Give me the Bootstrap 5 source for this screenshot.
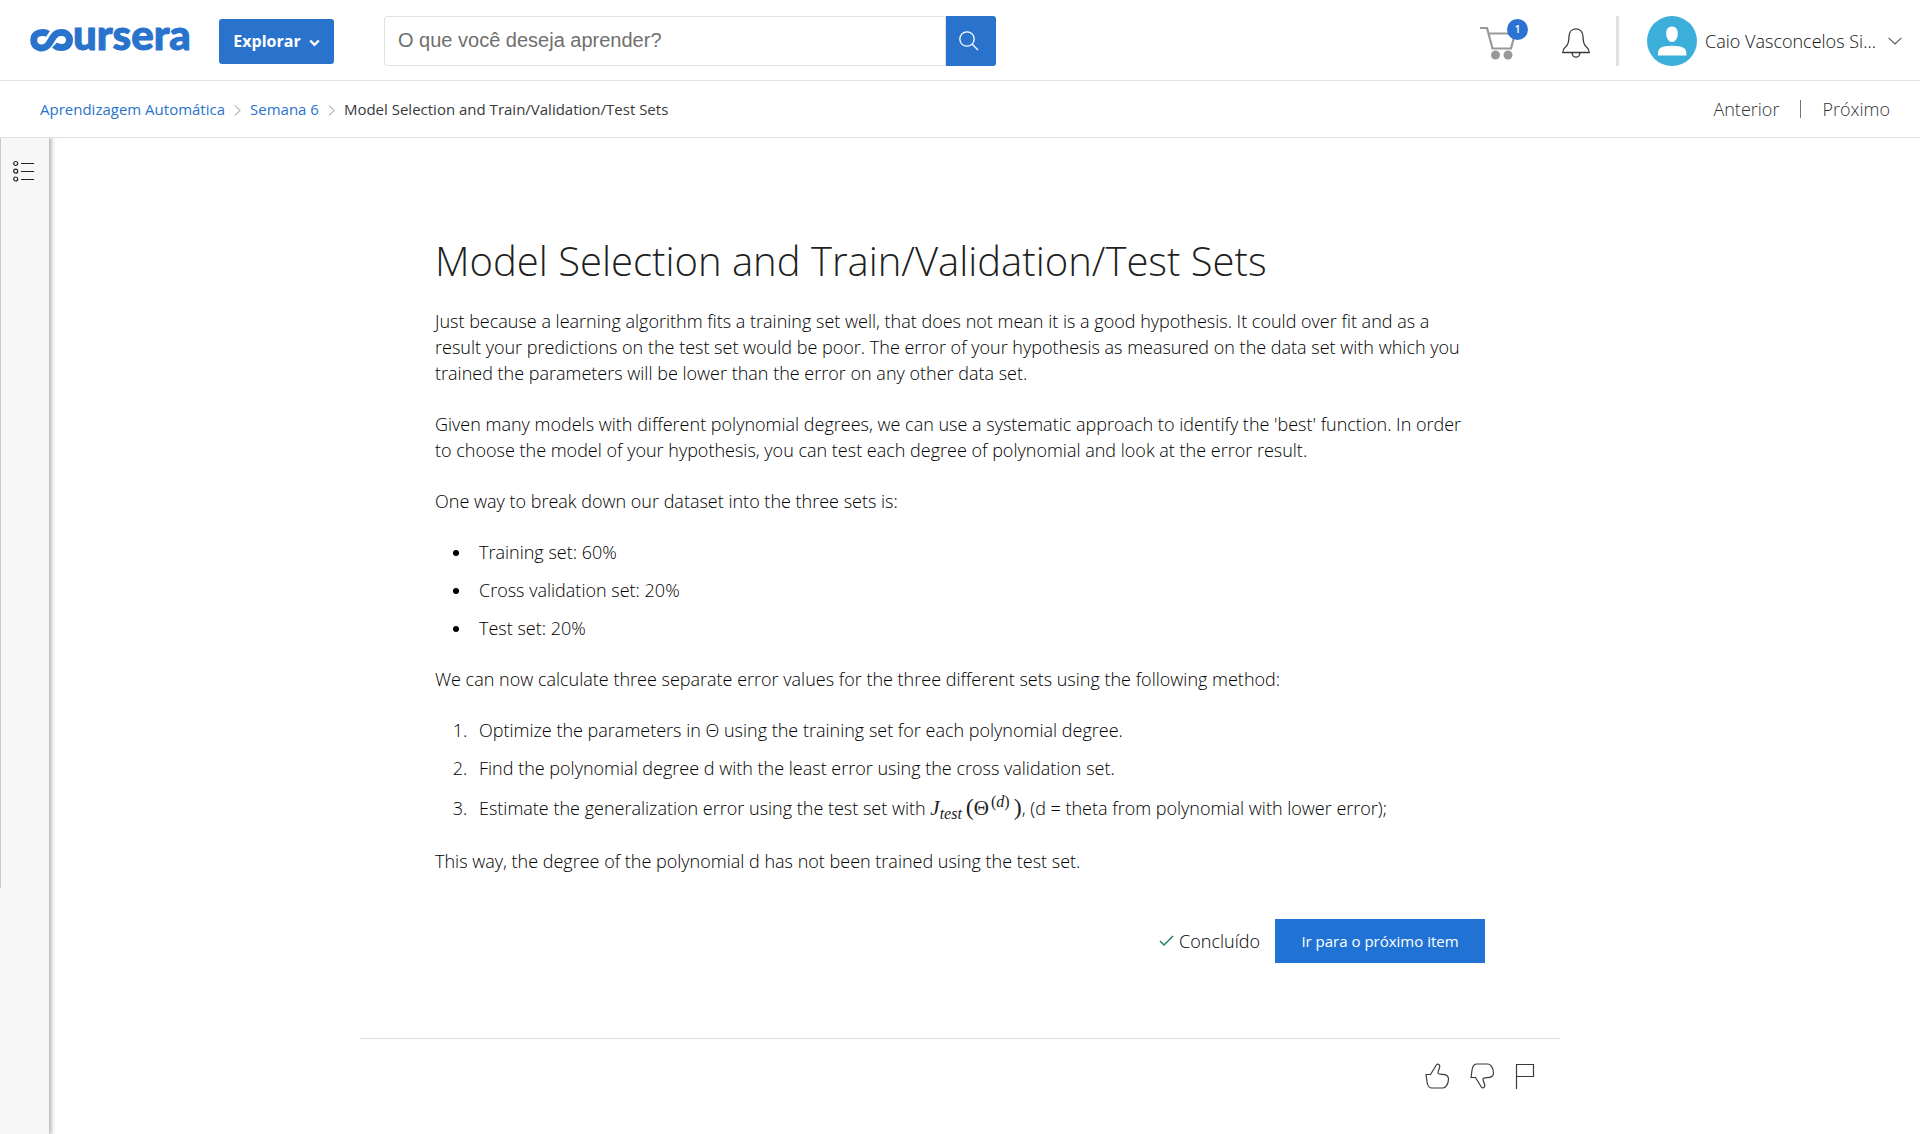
<!DOCTYPE html>
<html lang="pt-BR">
<head>
<meta charset="utf-8">
<meta name="viewport" content="width=device-width, initial-scale=1">
<title>Model Selection and Train/Validation/Test Sets | Coursera</title>
<link href="https://cdn.jsdelivr.net/npm/bootstrap@5.3.0/dist/css/bootstrap.min.css" rel="stylesheet">
<style>
body{font-family:"Open Sans",sans-serif;font-size:18px;font-weight:300;line-height:26px;color:#000;background:#fff}
svg{display:block;flex:none}
.site-header{height:81px;border-bottom:1px solid #e1e1e1;padding:2px 18px 0 30px}
.brand-word{font-family:Lato,sans-serif;font-weight:900;font-size:42px;fill:#2a73cc;stroke:#2a73cc;stroke-width:1px}
.btn-explore{width:115px;height:45px;background:#2a73cc;border-radius:3px;color:#fff;font-size:16px;font-weight:700;margin-left:23px}
.search-form{width:612px;height:50px;margin-left:50px}
.search-form .form-control{border:1px solid #e1e1e1;border-radius:3px 0 0 3px;font-family:"Liberation Sans",sans-serif;font-size:20px;padding:0 13px 2px;color:#333}
.search-form .form-control::placeholder{color:#6f6f6f;opacity:1}
.search-form .btn{flex:none;width:50px;background:#2a73cc;border-radius:0 3px 3px 0}
.cart-count{width:21px;height:21px;right:-12px;top:-3px;background:#2a73d2;color:#fff;font-size:10px;font-weight:600;line-height:21px}
.bell-link{margin-left:46px}
.head-rule{width:3px;height:50px;margin:0 28px 0 26px;background:#e1e1e1}
.user-name{color:#111}
.sub-bar{height:57px;border-bottom:1px solid #e1e1e1;padding:0 30px 0 40px}
.crumbs{font-size:15px;font-weight:400;gap:9px;color:#373a3c}
.crumbs a{color:#2a73cc}
.crumbs svg{margin-top:3px}
.item-nav a{color:#333}
.item-rule{width:1px;height:18px;background:#757575;margin:0 21px}
.page-body{min-height:calc(100vh - 138px)}
.side-rail{width:49px;background:#f7f7f7;box-shadow:1px 0 5px 1px rgba(0,0,0,.35);clip-path:inset(0 -10px 0 0)}
.rail-inner{height:750px;border-left:1px solid #ccc;padding:22px 0 0 12px}
.main-col{padding-right:49px}
.reading{max-width:1200px}
.reading-text{padding:95px 75px 0}
.reading h1{font-size:40px;font-weight:300;line-height:56px;margin:0 0 19px;color:#1f1f1f}
.reading-text p{max-width:1042px;margin:0 0 25px}
.reading-text ul,.reading-text ol{padding-left:37px;margin:0 0 25px}
.reading-text li{padding-left:7px}
.reading-text li+li{margin-top:12px}
.formula{font-family:"Liberation Serif",serif;font-size:21px;font-weight:400;line-height:30px;white-space:nowrap;color:#222}
.formula sub,.formula sup{font-size:16px;line-height:0}
.formula sub{margin-right:4px}
.formula sup{margin:0 4px 0 2px}
.formula .fence{font-size:24px;line-height:0}
.done-row{padding-top:20px}
.btn-next{width:210px;height:44px;background:#2073d5;border-radius:0;color:#fff;font-size:15px;margin-left:15px}
.feedback{border-top:1px solid #ddd;margin-top:75px;padding:24px 25px 0 0;gap:20px}
.btn-bare{border:0;background:none;padding:0;color:#373a3c;font-weight:300}
</style>
</head>
<body>
<header class="site-header d-flex align-items-center">
  <a href="#" aria-label="coursera">
    <svg width="166" height="68" viewBox="0 -13 166 68">
      <path d="M18 13.800C14.500 11.500 3.700 11.500 3.700 20C3.700 28.500 13.500 30 18 25C22.500 20 23 12.500 31.500 12.500C36.500 12.500 39.500 16 39.500 20C39.500 24.500 36.500 27.500 31.500 27.500C28 27.500 26.500 27 24.500 25" fill="none" stroke="#2a73cc" stroke-width="7"/>
      <text class="brand-word" x="43" y="30">ursera</text>
    </svg>
  </a>
  <button class="btn btn-explore d-flex align-items-center justify-content-center p-0" type="button">Explorar
    <svg class="ms-2 mt-1" width="11" height="8" viewBox="0 0 11 8"><path d="M1.200 1.500L5.500 5.800L9.800 1.500" fill="none" stroke="#fff" stroke-width="2.400"/></svg>
  </button>
  <form class="search-form d-flex" role="search">
    <input class="form-control" type="text" aria-label="Pesquisar" placeholder="O que você deseja aprender?">
    <button class="btn p-0 d-flex align-items-center justify-content-center" type="button" aria-label="Buscar">
      <svg class="me-1" width="20" height="20" viewBox="0 0 20 20" fill="none" stroke="#fff" stroke-width="1.300"><circle cx="8" cy="8" r="7.200"/><path d="M13 13L19 19"/></svg>
    </button>
  </form>
  <div class="d-flex align-items-center ms-auto">
    <a href="#" class="position-relative pt-1" aria-label="Carrinho">
      <svg width="36" height="34" viewBox="0 0 36 34"><path d="M0 2H7L12.500 22.500H31L35 7.500H8.500" fill="none" stroke="#999" stroke-width="2.200"/><circle cx="15.500" cy="29" r="4.500" fill="#999"/><circle cx="28" cy="29" r="4.500" fill="#999"/></svg>
      <span class="cart-count position-absolute rounded-circle text-center">1</span>
    </a>
    <a href="#" class="bell-link pt-1" aria-label="Notificações">
      <svg width="28" height="30" viewBox="0 0 28 30" fill="none" stroke="#373a3c" stroke-width="1.300"><path d="M14 .8C9.500 .8 7 4.300 7 8.500C7 14.500 6 17 3.500 19C1.500 20.600 .8 22 .8 24.500H27.200C27.200 22 26.500 20.600 24.500 19C22 17 21 14.500 21 8.500C21 4.300 18.500 .8 14 .8Z"/><path d="M10.200 25C10.200 27.500 12 29.200 14 29.200S17.800 27.500 17.800 25"/></svg>
    </a>
    <div class="head-rule"></div>
    <button class="btn-bare d-flex align-items-center" type="button">
      <svg width="50" height="50" viewBox="0 0 50 50"><circle cx="25" cy="25" r="25" fill="#3caeda"/><path d="M25 10.500C29 10.500 31 13.500 30.800 18C30.500 22.500 28 26 25 26S19.500 22.500 19.200 18C19 13.500 21 10.500 25 10.500ZM11 39.500C11 33 12.500 31.500 17 30.500C22 29.500 28 29.500 33 30.500C37.500 31.500 39.500 33 39.500 39.500Z" fill="#fff"/></svg>
      <span class="user-name mx-2">Caio Vasconcelos Si...</span>
      <svg class="ms-1" width="14" height="8" viewBox="0 0 14 8"><path d="M.6 .8L7 7L13.400 .8" fill="none" stroke="#555" stroke-width="1.100"/></svg>
    </button>
  </div>
</header>
<div class="sub-bar d-flex align-items-center justify-content-between">
  <nav class="crumbs d-flex align-items-center" aria-label="Trilha">
    <a class="text-decoration-none" href="#">Aprendizagem Automática</a>
    <svg width="7" height="11" viewBox="0 0 7 11"><path d="M1 .5L6 5.500L1 10.500" fill="none" stroke="#888"/></svg>
    <a class="text-decoration-none" href="#">Semana 6</a>
    <svg width="7" height="11" viewBox="0 0 7 11"><path d="M1 .5L6 5.500L1 10.500" fill="none" stroke="#888"/></svg>
    <span>Model Selection and Train/Validation/Test Sets</span>
  </nav>
  <nav class="item-nav d-flex align-items-center" aria-label="Itens">
    <a class="text-decoration-none" href="#">Anterior</a>
    <span class="item-rule"></span>
    <a class="text-decoration-none" href="#">Próximo</a>
  </nav>
</div>
<div class="page-body d-flex">
  <aside class="side-rail flex-shrink-0">
    <div class="rail-inner">
      <button class="btn-bare" type="button" aria-label="Menu do curso">
        <svg width="22" height="22" viewBox="0 0 22 22" fill="none" stroke="#222" stroke-width="1.200"><circle cx="2.700" cy="3.500" r="2"/><circle cx="2.700" cy="11.200" r="2"/><circle cx="2.700" cy="19" r="2"/><path d="M8 3.500H21M8 11.500H21M8 19.500H21"/></svg>
      </button>
    </div>
  </aside>
  <main class="main-col flex-grow-1">
    <div class="reading mx-auto">
      <article class="reading-text">
        <h1>Model Selection and Train/Validation/Test Sets</h1>
        <p>Just because a learning algorithm fits a training set well, that does not mean it is a good hypothesis. It could over fit and as a result your predictions on the test set would be poor. The error of your hypothesis as measured on the data set with which you trained the parameters will be lower than the error on any other data set.</p>
        <p>Given many models with different polynomial degrees, we can use a systematic approach to identify the 'best' function. In order to choose the model of your hypothesis, you can test each degree of polynomial and look at the error result.</p>
        <p>One way to break down our dataset into the three sets is:</p>
        <ul>
          <li>Training set: 60%</li>
          <li>Cross validation set: 20%</li>
          <li>Test set: 20%</li>
        </ul>
        <p>We can now calculate three separate error values for the three different sets using the following method:</p>
        <ol>
          <li>Optimize the parameters in Θ using the training set for each polynomial degree.</li>
          <li>Find the polynomial degree d with the least error using the cross validation set.</li>
          <li>Estimate the generalization error using the test set with <span class="formula"><i>J</i><sub><i>test</i></sub><span class="fence">(</span>Θ<sup>(<i>d</i>)</sup><span class="fence">)</span></span>, (d = theta from polynomial with lower error);</li>
        </ol>
        <p>This way, the degree of the polynomial d has not been trained using the test set.</p>
        <div class="done-row d-flex align-items-center justify-content-end">
          <svg class="me-1" width="16" height="12" viewBox="0 0 16 12"><path d="M1 6L5 10L14 1" fill="none" stroke="#1e8368" stroke-width="1.500"/></svg>
          <span>Concluído</span>
          <button class="btn btn-next p-0" type="button">Ir para o próximo item</button>
        </div>
      </article>
      <div class="feedback d-flex justify-content-end">
        <button class="btn-bare" type="button" aria-label="Gostei">
          <svg width="25" height="26" viewBox="0 0 25 26" fill="none" stroke="#373a3c" stroke-width="1.200"><path d="M1 11.500H5.500L11.500 1.800C12.300 .4 14.800 1.200 14.800 3.500C14.700 5.500 12.800 8 13 10C13.200 11.300 15 11.300 17 11.300C21 11.300 23.500 12.500 23.500 16C23.500 21 20.500 25 18 25H7C4 25 2.800 23 2.200 20Z"/></svg>
        </button>
        <button class="btn-bare" type="button" aria-label="Não gostei">
          <svg width="25" height="26" viewBox="0 0 25 26" fill="none" stroke="#373a3c" stroke-width="1.200"><path d="M1 14.500H5.500L11.500 24.200C12.300 25.600 14.800 24.800 14.800 22.500C14.700 20.500 12.800 18 13 16C13.200 14.700 15 14.700 17 14.700C21 14.700 23.500 13.500 23.500 10C23.500 5 20.500 1 18 1H7C4 1 2.800 3 2.200 6Z"/></svg>
        </button>
        <button class="btn-bare" type="button" aria-label="Denunciar">
          <svg width="20" height="26" viewBox="0 0 20 26" fill="none" stroke="#373a3c" stroke-width="1.200"><path d="M1.500 26V1.500H18.500V13.500H1.500"/></svg>
        </button>
      </div>
    </div>
  </main>
</div>
<script src="https://cdn.jsdelivr.net/npm/bootstrap@5.3.0/dist/js/bootstrap.bundle.min.js"></script>
</body>
</html>
